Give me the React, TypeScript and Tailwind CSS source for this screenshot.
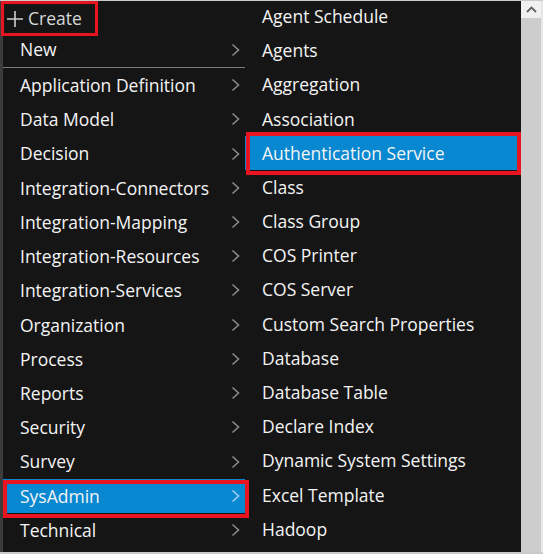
import React from "react";

const leftItems = [
  "Application Definition",
  "Data Model",
  "Decision",
  "Integration-Connectors",
  "Integration-Mapping",
  "Integration-Resources",
  "Integration-Services",
  "Organization",
  "Process",
  "Reports",
  "Security",
  "Survey",
  "SysAdmin",
  "Technical",
];

const rightItems = [
  "Agent Schedule",
  "Agents",
  "Aggregation",
  "Association",
  "Authentication Service",
  "Class",
  "Class Group",
  "COS Printer",
  "COS Server",
  "Custom Search Properties",
  "Database",
  "Database Table",
  "Declare Index",
  "Dynamic System Settings",
  "Excel Template",
  "Hadoop",
];

function Chevron({ active }: { active?: boolean }) {
  return (
    <svg width="9" height="14" viewBox="0 0 9 14" className="shrink-0">
      <path
        d="M1.5 1.5 L7.5 7 L1.5 12.5"
        fill="none"
        stroke={active ? "#9fd0ee" : "#8a8a8a"}
        strokeWidth="1.6"
      />
    </svg>
  );
}

function LeftRow({ label }: { label: string }) {
  const active = label === "SysAdmin";
  return (
    <div
      className={`relative flex h-[34.23px] items-center pl-[17px] pr-[5px] ${
        active ? "bg-[#0788d0]" : ""
      }`}
    >
      <span className="flex-1 whitespace-nowrap">{label}</span>
      <Chevron active={active} />
      {active && (
        <div className="pointer-events-none absolute left-0 right-[-4px] top-[1px] bottom-[-5px] border-[4px] border-[#e8141f]" />
      )}
    </div>
  );
}

function RightRow({ label }: { label: string }) {
  const active = label === "Authentication Service";
  return (
    <div
      className={`relative flex h-[34.2px] items-center pl-[17px] ${
        active ? "bg-[#0788d0]" : ""
      }`}
    >
      <span className="whitespace-nowrap">{label}</span>
      {active && (
        <div className="pointer-events-none absolute left-[1px] right-0 top-[-4px] bottom-[-5px] border-[4px] border-[#e8141f]" />
      )}
    </div>
  );
}

export default function App() {
  return (
    <div
      className="relative flex h-[554px] w-[543px] overflow-hidden border-t border-b-2 border-[#c9c9c9] bg-[#151515] text-[17.5px] text-[#f4f4f4]"
      style={{ fontFamily: '"Open Sans", "Noto Sans", sans-serif' }}
    >
      <div className="w-[3px] shrink-0 bg-[#3c3c3c]" />
      <div className="flex w-[242px] shrink-0 flex-col">
        <div className="h-[31px]">
          <div className="ml-[-2px] flex h-[35px] w-[97px] items-center gap-[3px] border-[3px] border-[#e8141f] pl-[1px] text-[17.5px] text-[#d8d8d8]">
            <svg width="20" height="20" viewBox="0 0 20 20">
              <path d="M10 2 V18 M2 10 H18" stroke="#cfcfcf" strokeWidth="1.6" />
            </svg>
            <span>Create</span>
          </div>
        </div>
        <div className="flex h-[35px] items-center pl-[17px] pr-[5px]">
          <span className="flex-1">New</span>
          <Chevron />
        </div>
        <div className="h-px bg-[#7a7a7a]" />
        {leftItems.map((l) => (
          <LeftRow key={l} label={l} />
        ))}
      </div>
      <div className="flex w-[276px] shrink-0 flex-col pt-0 mt-[-2px]">
        {rightItems.map((l) => (
          <RightRow key={l} label={l} />
        ))}
      </div>
      <div className="flex w-[20px] shrink-0 flex-col bg-[#cdcdcd]">
        <div className="flex h-[17px] items-center justify-center bg-[#f0f0f0]">
          <svg width="11" height="7" viewBox="0 0 11 7">
            <path d="M1 6 L5.5 1.5 L10 6" fill="none" stroke="#606060" strokeWidth="1.8" />
          </svg>
        </div>
      </div>
      <div className="w-[2px] shrink-0 bg-[#e6e6e6]" />
    </div>
  );
}
